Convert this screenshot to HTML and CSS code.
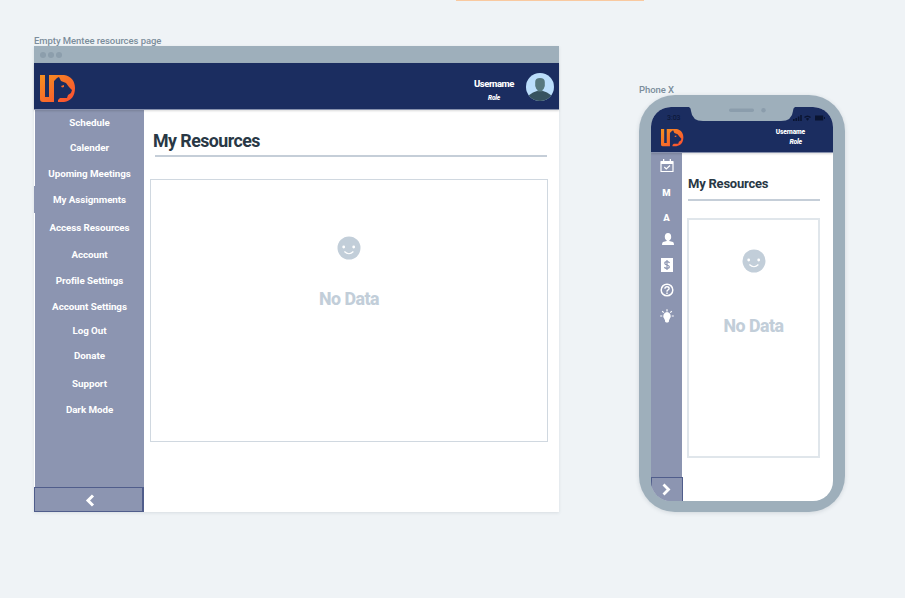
FILE: index.html
```html
<!DOCTYPE html>
<html lang="en">
<head>
<meta charset="utf-8">
<title>Mentee resources</title>
<link rel="stylesheet" href="styles.css">
</head>
<body>
<svg class="defs" width="0" height="0" aria-hidden="true">
  <defs>
    <linearGradient id="flame" x1="0" y1="0" x2="1" y2="1"><stop offset="0" stop-color="#f59120"/><stop offset="1" stop-color="#fb4c32"/></linearGradient>
    <symbol id="logo" viewBox="0 0 36 28">
      <path fill="url(#flame)" d="M0 0H5V22H9V0H24C31 1 35 6 35 13C35 21 31 26 24 27H18V25L20 23H27L28 20L31 18L32 15L29 12L26 8L21 6L19 2L17 3L14 6V27H3Q0 27 0 24ZM21 11L24 10V12L22 12.5Z"/>
    </symbol>
    <symbol id="smile" viewBox="0 0 24 24">
      <circle cx="12" cy="12" r="11.5" fill="#c2ced9"/><circle cx="6.7" cy="11" r="1.4" fill="#fff"/><circle cx="16.7" cy="11" r="1.4" fill="#fff"/><path d="M7.4 15.5Q12 20 16.4 15.5" fill="none" stroke="#fff" stroke-width="1.2"/>
    </symbol>
  </defs>
</svg>
<div class="accent"></div>
<main class="canvas">
  <section class="desktop">
    <div class="caption">Empty Mentee resources page</div>
    <div class="window">
      <div class="titlebar"><i></i><i></i><i></i></div>
      <header class="top">
        <svg class="logo"><use href="#logo"/></svg>
        <div class="user"><b>Username</b><em>Role</em></div>
        <svg class="avatar" viewBox="0 0 28 28"><defs><clipPath id="round"><circle cx="14" cy="14" r="14"/></clipPath></defs><g clip-path="url(#round)"><path fill="#bbdefb" d="M0 0H28V28H0Z"/><path fill="#37535f" d="M1 28Q2 20 11 18H17Q26 20 27 28Z"/><path fill="#57787e" d="M9.2 9Q9.2 5 14 5Q18.8 5 18.8 9V13Q18 16 16.5 17V18.5H11.5V17Q10 16 9.2 13Z"/></g></svg>
      </header>
      <div class="body">
        <aside class="side">
          <nav>
            <a>Schedule</a><a>Calender</a><a>Upoming Meetings</a><a class="wide">My Assignments</a><a>Access Resources</a><a>Account</a><a>Profile Settings</a><a>Account Settings</a><a>Log Out</a><a>Donate</a><a>Support</a><a>Dark Mode</a>
          </nav>
          <div class="toggle"><svg width="10" height="13" viewBox="0 0 10 13"><path d="M8 1.5L3 6.5L8 11.5" fill="none" stroke="#fff" stroke-width="3"/></svg></div>
        </aside>
        <div class="content">
          <h1>My Resources</h1>
          <div class="empty"><svg><use href="#smile"/></svg><p>No Data</p></div>
        </div>
      </div>
    </div>
  </section>
  <section class="mobile">
    <div class="caption">Phone X</div>
    <div class="phone">
      <div class="screen">
        <header class="ptop">
          <svg class="logo"><use href="#logo"/></svg>
          <div class="user"><b>Username</b><em>Role</em></div>
        </header>
        <div class="pbody">
          <aside class="rail">
            <svg class="cal" viewBox="0 0 14 14"><path d="M1 4V2.5H13V12.5H1Z" fill="none" stroke="#fff" stroke-width="1.2" stroke-linejoin="round"/><path d="M1 3H13V5H1ZM3 0H4.3V3H3ZM9.7 0H11V3H9.7Z" fill="#fff"/><path d="M4.3 8L6.3 10L10 6.5" fill="none" stroke="#fff" stroke-width="1.2"/></svg>
            <span class="m">M</span>
            <span class="a">A</span>
            <svg class="person" viewBox="0 0 12 12"><ellipse cx="6" cy="3.8" rx="3.2" ry="3.8" fill="#fff"/><path d="M4.7 6H7.3V8L11 9Q12 9.5 12 12H0Q0 9.5 1 9L4.7 8Z" fill="#fff"/></svg>
            <svg class="money" viewBox="0 0 12 14"><path d="M0 0H12V14H0Z" fill="#fff"/><path d="M8.5 5Q8 3.6 6 3.6Q3.8 3.6 3.8 5.3Q3.8 6.5 6 7Q8.3 7.5 8.3 8.8Q8.3 10.4 6 10.4Q3.8 10.4 3.5 9M6 2V12" fill="none" stroke="#8c95b1" stroke-width="1.2"/></svg>
            <svg class="help" viewBox="0 0 14 14"><circle cx="7" cy="7" r="5.8" fill="none" stroke="#fff" stroke-width="1.5"/><path d="M4.9 5.7Q5 3.8 7 3.8Q9.1 3.8 9.1 5.5Q9.1 6.5 7.8 7.1Q7 7.5 7 8.7M7 9.5V11" fill="none" stroke="#fff" stroke-width="1.4"/></svg>
            <svg class="bulb" viewBox="0 0 14 14"><path d="M7 2.9A4.2 4.2 0 0 1 9.6 10L9.2 11H4.8L4.4 10A4.2 4.2 0 0 1 7 2.9ZM5 11H9V12.5L8 13.5H6L5 12.5Z" fill="#fff"/><path d="M7 .3V2.5M2.2 2.2L3.7 3.7M11.8 2.2L10.3 3.7M.2 7H2.3M13.8 7H11.7" stroke="#fff" stroke-width="1.2"/></svg>
            <div class="ptoggle"><svg width="10" height="13" viewBox="0 0 10 13"><path d="M1.5 1.5L6.5 6.5L1.5 11.5" fill="none" stroke="#fff" stroke-width="2.8"/></svg></div>
          </aside>
          <div class="pcontent">
            <h2>My Resources</h2>
            <div class="empty"><svg><use href="#smile"/></svg><p>No Data</p></div>
          </div>
        </div>
      </div>
      <svg class="notch" viewBox="0 0 182 16"><path fill="#9eafbb" d="M36 -1H146L144 0Q142 1 142 4Q141 14 130 14H52Q41 14 40 4Q40 1 38 0Z"/><rect x="78" y="1.5" width="25" height="3.5" rx="1.7" fill="#8b9dac"/><circle cx="112.5" cy="3.2" r="2.2" fill="#8b9dac"/></svg>
      <span class="clock">3:03</span>
      <svg class="status" viewBox="0 0 32 6"><path fill="#0a1431" d="M0 4H1.6V6H0ZM2.4 3H4V6H2.4ZM4.8 1.5H6.4V6H4.8ZM7.2 0H8.8V6H7.2ZM11 2Q14.5-1 18 2L17 3Q14.5 1 12 3ZM12.8 3.8Q14.5 2.4 16.2 3.8L14.5 5.8ZM22 .6H30.2V5.4H22ZM31 2V4H32V2Z"/></svg>
    </div>
  </section>
</main>
</body>
</html>
```

FILE: styles.css
```css
* { box-sizing: border-box; }
body { margin: 0; width: 905px; height: 598px; overflow: hidden; background: #eff3f6; font-family: Roboto, "Open Sans", sans-serif; }
svg { display: block; }
h1, h2, p { margin: 0; }
.defs { position: absolute; }
.accent { width: 188px; height: 1px; margin-left: 456px; background: #f9c9a0; }
.canvas { display: flex; align-items: flex-start; padding: 33px 60px 0 34px; justify-content: space-between; }
.caption { height: 12px; font-size: 9.5px; line-height: 13px; font-weight: 500; color: #7b8d9b; white-space: nowrap; }
.desktop { width: 525px; }
.desktop .caption { letter-spacing: -.06px; }
.window { height: 466px; background: #fff; box-shadow: 0 1px 3px rgba(50, 70, 90, .12); display: flex; flex-direction: column; }
.titlebar { height: 17px; background: #9eafbb; display: flex; align-items: center; gap: 2px; padding-left: 6px; }
.titlebar i { width: 6px; height: 6px; border-radius: 50%; background: #8c9eac; }
.top { height: 47px; background: #1b2d60; border-bottom: 1px solid #8791ad; display: flex; align-items: center; padding: 0 5px 0 6px; box-shadow: 0 1px 2px rgba(0, 0, 0, .15); z-index: 1; }
.logo { width: 36px; height: 28px; margin-top: 5px; }
.user { margin-left: auto; display: flex; flex-direction: column; align-items: center; color: #fff; }
.user b { font-size: 9.5px; line-height: 12px; letter-spacing: -.45px; font-weight: 800; }
.user em { font-size: 6.5px; line-height: 10px; margin-top: 3px; font-weight: 900; letter-spacing: -.2px; }
.top .user { margin-right: 12px; padding-top: 8px; }
.avatar { width: 28px; height: 28px; margin-top: 1px; }
.body { flex: 1; display: flex; }
.side { width: 110px; display: flex; flex-direction: column; }
.side nav { flex: 1; margin-left: 1px; background: #8c95b1; display: grid; grid-template-rows: 26px 25px 27px 25px 30px 25px 27px 25px 23px 27px 28px 25px; align-content: start; }
.side a { display: flex; align-items: center; justify-content: center; padding-bottom: 2px; color: #fff; font-size: 9.8px; letter-spacing: -.06px; font-weight: 700; }
.side .wide { margin: -2px 0 0 -1px; padding: 2px 0 2px 1px; background: #8c95b1; }
.toggle { height: 25px; border: 1px solid #505d8b; border-right-width: 2px; background: #8c95b1; display: flex; align-items: center; justify-content: center; padding: 2px 0 0 2px; }
.content { flex: 1; padding: 20px 12px 0 6px; }
h1 { height: 27px; margin-left: 5px; border-bottom: 2px solid #c5ced8; font-size: 17.8px; line-height: 22px; font-weight: 700; color: #293845; text-indent: -2px; letter-spacing: -.55px; }
.empty { border: 1px solid #d5dce3; display: flex; flex-direction: column; align-items: center; color: #c2ced9; }
.content .empty { height: 263px; margin: 22px -1px 0 0; padding-top: 56px; border-color: #d0d8e0; }
.empty svg { width: 24px; height: 24px; }
.empty p { margin-top: 28px; font-size: 17.8px; line-height: 22px; font-weight: 800; letter-spacing: -.5px; }
.mobile { width: 206px; padding-top: 49px; }
.phone { position: relative; height: 417px; padding: 12px; border-radius: 36px; background: #9eafbb; box-shadow: 0 1px 4px rgba(50, 70, 90, .16); }
.mobile .caption { letter-spacing: -.06px; }
.screen { height: 394px; border-radius: 20px; overflow: hidden; background: #fff; display: flex; flex-direction: column; }
.ptop { height: 46px; background: #1b2d60; border-bottom: 1px solid #8791ad; display: flex; padding: 22px 28px 0 10px; box-shadow: 0 1px 2px rgba(0, 0, 0, .15); z-index: 1; }
.ptop .logo { width: 23px; height: 18px; margin-top: 0; }
.ptop .user b { font-size: 6.6px; line-height: 8px; margin-top: -1px; font-weight: 900; letter-spacing: -.15px; }
.ptop .user em { align-self: flex-end; font-size: 6.8px; line-height: 8px; margin: 2px 3px 0 0; }
.pbody { flex: 1; display: flex; }
.rail { width: 31px; background: #8c95b1; display: flex; flex-direction: column; align-items: center; padding-top: 6px; color: #fff; font-size: 9.5px; line-height: 12px; font-weight: 900; }
.cal { width: 14px; height: 14px; }
.m { margin-top: 14px; }
.a { margin-top: 13px; }
.person { width: 12px; height: 12px; margin: 9px 0 0 2px; }
.money { width: 12px; height: 14px; margin-top: 13px; }
.help { width: 14px; height: 14px; margin-top: 11px; }
.bulb { width: 14px; height: 14px; margin-top: 12px; }
.ptoggle { margin-top: auto; width: 32px; height: 24px; align-self: flex-start; border: solid #505d8b; border-width: 1px 1px 0 1px; background: #8c95b1; display: flex; align-items: center; justify-content: center; }
.pcontent { flex: 1; padding: 20px 13px 0 5px; }
h2 { height: 28px; margin-left: 1px; border-bottom: 2px solid #c5ced8; font-size: 13px; line-height: 22px; font-weight: 700; color: #293845; letter-spacing: -.22px; }
.pcontent .empty { height: 240px; margin-top: 17px; padding-top: 29px; border: 2px solid #e0e6eb; }
.pcontent .empty p { margin-top: 42px; }
.notch { position: absolute; z-index: 2; left: 12px; top: 12px; width: 182px; height: 16px; overflow: visible; }
.clock { position: absolute; z-index: 2; left: 28px; top: 17px; font-size: 7px; line-height: 12px; color: #0a1431; }
.status { position: absolute; z-index: 2; left: 154px; top: 20px; width: 32px; height: 6px; }
```
